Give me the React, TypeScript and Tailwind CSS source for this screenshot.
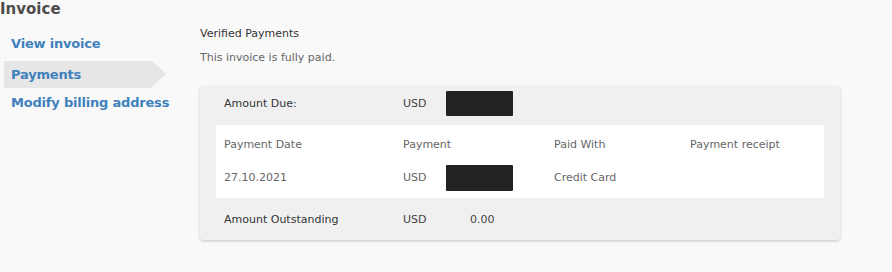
export default function App() {
  const f = { fontFamily: '"DejaVu Sans", Verdana, sans-serif' };
  return (
    <div className="w-[892px] h-[272px] bg-[#f9f9f9] text-[#555] overflow-hidden" style={f}>
      <div className="text-[15px] font-bold leading-[18px] text-[#4d4d4d]">Invoice</div>
      <div className="flex">
        <div className="w-[200px] pt-[17px] flex flex-col">
          <a className="pl-[11px] h-[18px] leading-[18px] text-[13px] font-bold text-[#3f81bd] tracking-[-0.2px]">View invoice</a>
          <div className="relative mt-[8px] ml-[4px] w-[148px] h-[27px] bg-[#e6e6e6] flex items-center">
            <span className="pl-[7px] text-[13px] font-bold text-[#3f81bd] tracking-[-0.2px]">Payments</span>
            <div className="absolute left-[148px] top-0 w-0 h-0 border-y-[13.5px] border-y-transparent border-l-[14px] border-l-[#e6e6e6]" />
          </div>
          <a className="pl-[11px] mt-[6px] h-[18px] leading-[18px] text-[13px] font-bold text-[#3f81bd] tracking-[-0.2px]">Modify billing address</a>
        </div>
        <div className="flex-1 pt-[9px]">
          <div className="text-[11px] text-[#333] leading-[14px]">Verified Payments</div>
          <div className="mt-[10px] text-[11px] text-[#666] leading-[14px]">This invoice is fully paid.</div>
          <div className="mt-[21px] w-[640px] bg-[#f0f0f0] rounded-[3px] shadow-[0_1px_3px_rgba(0,0,0,0.2)] pt-[5px] pb-[11px] text-[11px]">
            <div className="flex items-center h-[25px] px-[24px] pt-[2px]">
              <span className="w-[179px] text-[#333]">Amount Due:</span>
              <span className="w-[43px] text-[#444]">USD</span>
              <span className="w-[67px] h-[25px] -mt-[2px] bg-[#222] rounded-[1px]" />
            </div>
            <div className="mx-[16px] mt-[9px] bg-white rounded-[2px] px-[8px] pt-[12px] pb-[7px] text-[#666]">
              <div className="flex h-[17px] items-center">
                <span className="w-[179px]">Payment Date</span>
                <span className="w-[151px]">Payment</span>
                <span className="w-[136px]">Paid With</span>
                <span>Payment receipt</span>
              </div>
              <div className="flex mt-[11px] h-[26px] items-center">
                <span className="w-[179px] pt-[1px]">27.10.2021</span>
                <span className="w-[43px] pt-[1px]">USD</span>
                <span className="w-[67px] h-[26px] bg-[#222] rounded-[1px]" />
                <span className="w-[41px]" />
                <span className="pt-[1px]">Credit Card</span>
              </div>
            </div>
            <div className="flex items-center h-[17px] mt-[14px] px-[24px]">
              <span className="w-[179px] text-[#333]">Amount Outstanding</span>
              <span className="w-[67px] text-[#444]">USD</span>
              <span className="text-[#444]">0.00</span>
            </div>
          </div>
        </div>
      </div>
    </div>
  );
}
